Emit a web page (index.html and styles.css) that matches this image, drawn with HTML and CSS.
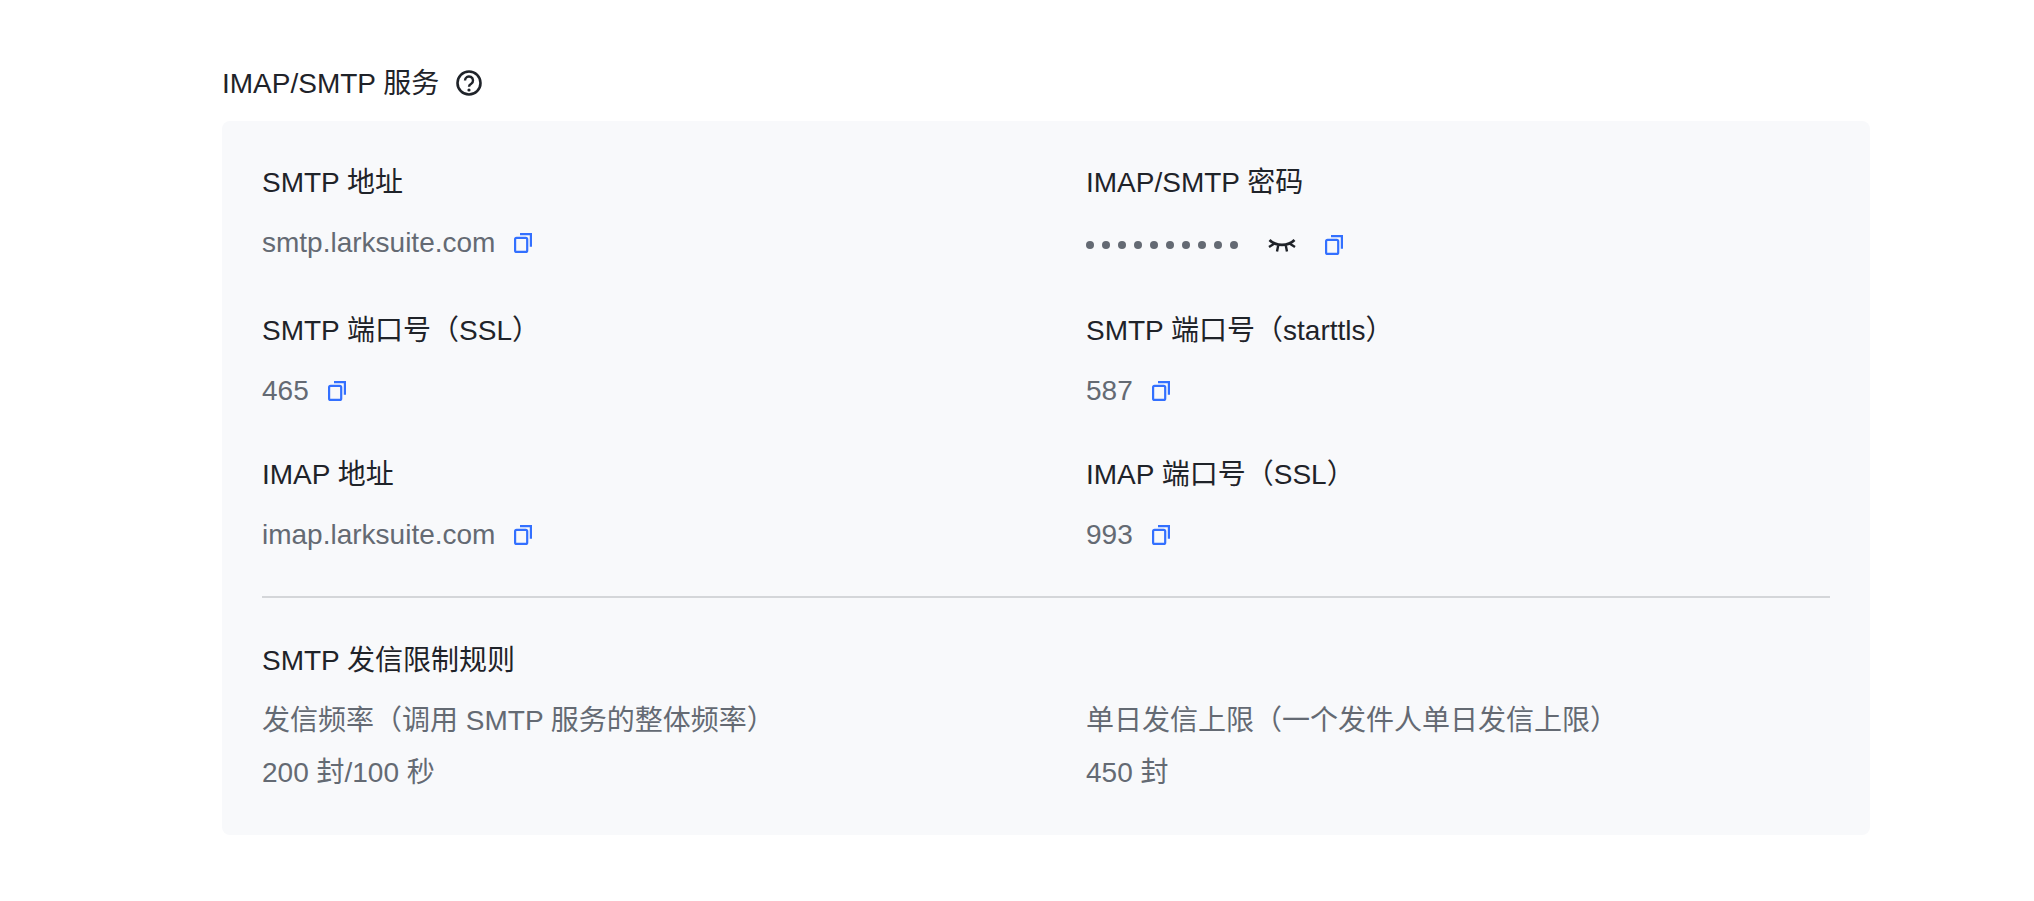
FILE: index.html
```html
<!DOCTYPE html>
<html lang="zh">
<head>
<meta name="viewport" content="width=device-width, initial-scale=1.0">
  <title>IMAP/SMTP 服务</title>
  <link rel="stylesheet" href="styles.css">
</head>
<body>

  <svg class="defs" width="0" height="0">
    <symbol id="copy" viewBox="0 0 18 20">
      <rect x="1.100" y="4.800" width="12.100" height="14.100" rx="1.500" fill="none" stroke="currentColor" stroke-width="2.200"/>
      <path d="M6 1.100H16.900V13.700" fill="none" stroke="currentColor" stroke-width="2.200"/>
    </symbol>
  </svg>

  <div class="pagina">
    <div class="titulo">
      <span>IMAP/SMTP 服务</span>
      <svg class="ayuda" viewBox="0 0 26 26">
        <circle cx="13" cy="13" r="11.500" fill="none" stroke="currentColor" stroke-width="2.600"/>
        <path d="M9 10.500a4 4 0 1 1 6.200 3.300c-1.500.9-2.200 1.500-2.200 3" fill="none" stroke="currentColor" stroke-width="2.400"/>
        <circle cx="13" cy="20" r="1.600" fill="currentColor"/>
      </svg>
    </div>

    <div class="tarjeta">
      <div class="rejilla">
        <div class="campo">
          <div class="etiqueta">SMTP 地址</div>
          <div class="valor">smtp.larksuite.com <svg class="copiar"><use href="#copy"/></svg></div>
        </div>
        <div class="campo">
          <div class="etiqueta">IMAP/SMTP 密码</div>
          <div class="valor valor-clave">
            <span class="puntos"><i></i><i></i><i></i><i></i><i></i><i></i><i></i><i></i><i></i><i></i></span>
            <svg class="ojo" viewBox="0 0 28 14">
              <path d="M1.500 2C8 8.500 20 8.500 26.500 2" fill="none" stroke="currentColor" stroke-width="2.600"/>
              <path d="M1 9L6.500 5.500M9 13.500l1.200-6M19 13.500l-1.200-6M27 9L21.500 5.500" fill="none" stroke="currentColor" stroke-width="2.400"/>
            </svg>
            <svg class="copiar"><use href="#copy"/></svg>
          </div>
        </div>
        <div class="campo">
          <div class="etiqueta">SMTP 端口号（SSL）</div>
          <div class="valor">465 <svg class="copiar"><use href="#copy"/></svg></div>
        </div>
        <div class="campo">
          <div class="etiqueta">SMTP 端口号（starttls）</div>
          <div class="valor">587 <svg class="copiar"><use href="#copy"/></svg></div>
        </div>
        <div class="campo">
          <div class="etiqueta">IMAP 地址</div>
          <div class="valor">imap.larksuite.com <svg class="copiar"><use href="#copy"/></svg></div>
        </div>
        <div class="campo">
          <div class="etiqueta">IMAP 端口号（SSL）</div>
          <div class="valor">993 <svg class="copiar"><use href="#copy"/></svg></div>
        </div>
      </div>

      <div class="limites">
        <div class="etiqueta">SMTP 发信限制规则</div>
        <div class="rejilla-limites">
          <div>
            <div class="texto">发信频率（调用 SMTP 服务的整体频率）</div>
            <div class="texto">200 封/100 秒</div>
          </div>
          <div>
            <div class="texto">单日发信上限（一个发件人单日发信上限）</div>
            <div class="texto">450 封</div>
          </div>
        </div>
      </div>
    </div>
  </div>

</body>
</html>
```

FILE: styles.css
```css
* {
  margin: 0;
  padding: 0;
  box-sizing: border-box;
}

body {
  background: #ffffff;
  color: #1f2329;
  font-family: "Liberation Sans", "Noto Sans CJK SC", sans-serif;
  font-size: 28px;
}

.defs {
  position: absolute;
}

.pagina {
  width: 1648px;
  margin-left: 222px;
  padding-top: 62px;
}

.titulo {
  display: flex;
  align-items: center;
  gap: 17px;
  height: 42px;
  margin-bottom: 17px;
  line-height: 38px;
}

.titulo span {
  margin-top: 1px;
}

.ayuda {
  width: 26px;
  height: 26px;
  color: #1f2329;
}

.tarjeta {
  height: 714px;
  padding: 44px 40px 0;
  background: #f8f9fb;
  border-radius: 8px;
}

.rejilla {
  display: grid;
  grid-template-columns: 824px 1fr;
  grid-template-rows: 148px 144px 139px;
}

.etiqueta {
  line-height: 36px;
}

.valor {
  display: flex;
  align-items: center;
  height: 36px;
  margin-top: 24px;
  color: #646a73;
  white-space: pre;
}

.valor-clave {
  margin-top: 26px;
}

.copiar {
  width: 18px;
  height: 20px;
  margin-left: 11px;
  color: #3370ff;
}

.puntos {
  display: flex;
  gap: 8px;
}

.puntos i {
  width: 8px;
  height: 8px;
  border-radius: 50%;
  background: #646a73;
}

.ojo {
  width: 28px;
  height: 14px;
  margin: 0 29px 0 30px;
  color: #1f2329;
}

.ojo + .copiar {
  margin-left: 0;
}

.limites {
  border-top: 2px solid #d4d6d9;
  padding-top: 45px;
}

.rejilla-limites {
  display: grid;
  grid-template-columns: 824px 1fr;
  margin-top: 24px;
}

.texto {
  color: #646a73;
  line-height: 36px;
  margin-bottom: 16px;
}
```
